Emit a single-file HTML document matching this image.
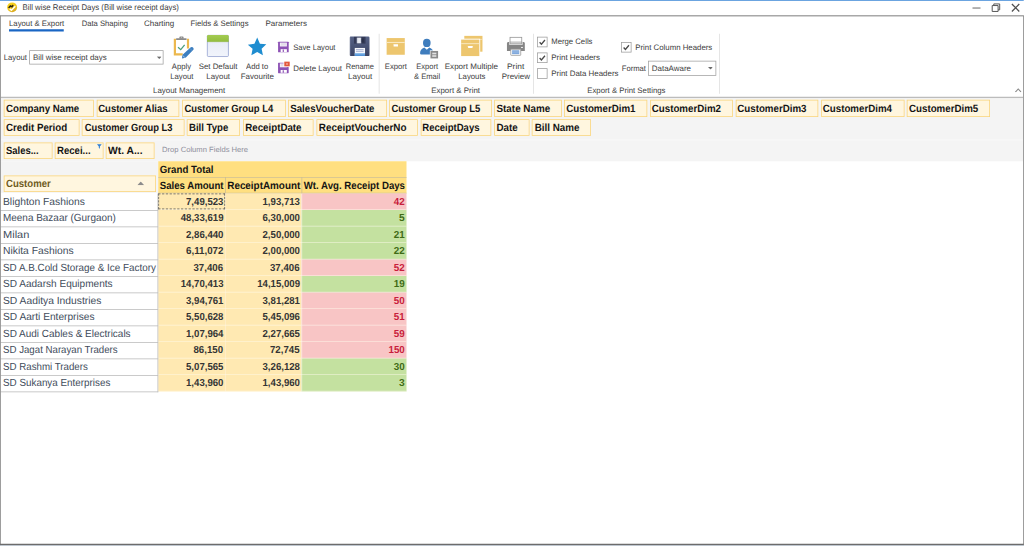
<!DOCTYPE html>
<html lang="en"><head><meta charset="utf-8"><title>Bill wise Receipt Days</title>
<style>
html,body{margin:0;padding:0;background:#fff;overflow:hidden}
body{width:1024px;height:546px;position:relative}
#w{position:absolute;left:0;top:0;width:1366px;height:728px;transform-origin:0 0;transform:scale(0.75);
background:#fff;font-family:"Liberation Sans",sans-serif;overflow:hidden;text-rendering:geometricPrecision}
.b{position:absolute;display:block}
.t{position:absolute;white-space:nowrap;margin:0;padding:0;transform-origin:0 50%}
</style></head>
<body>
<div id="w">
<div class="b" style="left:0px;top:0px;width:1365.33px;height:1.47px;background:#3a86d6;"></div>
<svg class="b" style="left:0px;top:0px" width="53.33" height="26.67" viewBox="0 0 1024 512"><defs><linearGradient id="tig" x1="0.2" y1="0" x2="0.8" y2="1"><stop offset="0" stop-color="#fbd51c"/><stop offset="0.55" stop-color="#f2c71f"/><stop offset="1" stop-color="#cf9f22"/></linearGradient></defs><circle cx="310" cy="188" r="127" fill="url(#tig)"/><path d="M205 190 L262 130 L300 150 L330 118 L350 150 L312 200 L275 178 L235 212 Z" fill="#2b2410"/><path d="M248 222 L292 262 L392 160" fill="none" stroke="#fff" stroke-width="34" stroke-linejoin="miter"/></svg>
<div id="t1" class="t " style="top:2.46px;height:16px;line-height:16px;font-size:11px;color:#3c3c3c;left:29.58px;transform:scaleX(0.9451);">Bill wise Receipt Days (Bill wise receipt days)</div>
<svg class="b" style="left:1293.87px;top:2.67px" width="69.33" height="14.67" viewBox="0 0 52 11"><path d="M2 5.8 H10" stroke="#666" stroke-width="1" fill="none"/><path d="M21.7 3.3 H27.6 V9.2 H21.7 Z M23.3 3.3 V1.7 H29.2 V7.6 H27.6" stroke="#555" stroke-width="1" fill="none"/><path d="M41.4 1.8 L48.8 9.2 M48.8 1.8 L41.4 9.2" stroke="#505050" stroke-width="1.25" fill="none"/></svg>
<div class="b" style="left:0px;top:20px;width:1365.33px;height:2px;background:#a8a8a8;"></div>
<div id="t2" class="t " style="top:23.76px;height:16px;line-height:16px;font-size:10.5px;color:#3c3c3c;left:12.12px;transform:scaleX(0.9854);">Layout &amp; Export</div>
<div id="t3" class="t " style="top:23.76px;height:16px;line-height:16px;font-size:10.5px;color:#3c3c3c;left:108.52px;transform:scaleX(0.9684);">Data Shaping</div>
<div id="t4" class="t " style="top:23.76px;height:16px;line-height:16px;font-size:10.5px;color:#3c3c3c;left:191.85px;transform:scaleX(1.0150);">Charting</div>
<div id="t5" class="t " style="top:23.76px;height:16px;line-height:16px;font-size:10.5px;color:#3c3c3c;left:254.38px;transform:scaleX(0.9819);">Fields &amp; Settings</div>
<div id="t6" class="t " style="top:23.76px;height:16px;line-height:16px;font-size:10.5px;color:#3c3c3c;left:354.38px;transform:scaleX(1.0177);">Parameters</div>
<div class="b" style="left:12px;top:38.67px;width:73.33px;height:3.47px;background:#1a66c4;"></div>
<div class="b" style="left:1.33px;top:129.33px;width:1362.67px;height:1.33px;background:#bcbcbc;"></div>
<div class="b" style="left:1.33px;top:130.67px;width:1362.67px;height:84px;background:#f4f4f4;"></div>
<div class="b" style="left:1.33px;top:214.67px;width:209.47px;height:42.13px;background:#f4f4f4;"></div>
<div class="b" style="left:1.33px;top:185.6px;width:1362.67px;height:1.07px;background:#fafafa;"></div>
<div id="t7" class="t " style="top:69.03px;height:16px;line-height:16px;font-size:10.5px;color:#404040;left:5.18px;transform:scaleX(0.9822);">Layout</div>
<div class="b" style="left:38.67px;top:66.67px;width:179.67px;height:19.47px;background:#fff;border:1px solid #a0a0a0;box-sizing:border-box;"></div>
<div id="t8" class="t " style="top:69.03px;height:16px;line-height:16px;font-size:10.5px;color:#404040;left:43.85px;transform:scaleX(1.0087);">Bill wise receipt days</div>
<svg class="b" style="left:208.67px;top:74.93px" width="6.67" height="3.73" viewBox="0 0 10 5"><path d="M0 0 H10 L5 5 Z" fill="#6a6a6a"/></svg>
<div id="t9" class="t " style="top:80.76px;height:16px;line-height:16px;font-size:10.5px;color:#404040;left:229.18px;transform:scaleX(0.9762);">Apply</div>
<div id="t10" class="t " style="top:93.83px;height:16px;line-height:16px;font-size:10.5px;color:#404040;left:226.52px;transform:scaleX(0.9819);">Layout</div>
<div id="t11" class="t " style="top:80.76px;height:16px;line-height:16px;font-size:10.5px;color:#404040;left:264.52px;transform:scaleX(0.9938);">Set Default</div>
<div id="t12" class="t " style="top:93.83px;height:16px;line-height:16px;font-size:10.5px;color:#404040;left:275.18px;transform:scaleX(1.0034);">Layout</div>
<div id="t13" class="t " style="top:80.76px;height:16px;line-height:16px;font-size:10.5px;color:#404040;left:327.85px;transform:scaleX(0.9760);">Add to</div>
<div id="t14" class="t " style="top:93.83px;height:16px;line-height:16px;font-size:10.5px;color:#404040;left:321.18px;transform:scaleX(1.0118);">Favourite</div>
<div id="t15" class="t " style="top:80.76px;height:16px;line-height:16px;font-size:10.5px;color:#404040;left:461.18px;transform:scaleX(0.9480);">Rename</div>
<div id="t16" class="t " style="top:93.83px;height:16px;line-height:16px;font-size:10.5px;color:#404040;left:463.85px;transform:scaleX(1.0244);">Layout</div>
<div id="t17" class="t " style="top:80.76px;height:16px;line-height:16px;font-size:10.5px;color:#404040;left:513.18px;transform:scaleX(0.9763);">Export</div>
<div id="t18" class="t " style="top:80.76px;height:16px;line-height:16px;font-size:10.5px;color:#404040;left:555.18px;transform:scaleX(0.9542);">Export</div>
<div id="t19" class="t " style="top:93.83px;height:16px;line-height:16px;font-size:10.5px;color:#404040;left:551.85px;transform:scaleX(0.9664);">&amp; Email</div>
<div id="t20" class="t " style="top:80.76px;height:16px;line-height:16px;font-size:10.5px;color:#404040;left:593.18px;transform:scaleX(1.0218);">Export Multiple</div>
<div id="t21" class="t " style="top:93.83px;height:16px;line-height:16px;font-size:10.5px;color:#404040;left:610.52px;transform:scaleX(0.9869);">Layouts</div>
<div id="t22" class="t " style="top:80.76px;height:16px;line-height:16px;font-size:10.5px;color:#404040;left:675.85px;transform:scaleX(1.0637);">Print</div>
<div id="t23" class="t " style="top:93.83px;height:16px;line-height:16px;font-size:10.5px;color:#404040;left:669.18px;transform:scaleX(1.0075);">Preview</div>
<div id="t24" class="t " style="top:55.29px;height:16px;line-height:16px;font-size:10.5px;color:#404040;left:390.52px;transform:scaleX(0.9642);">Save Layout</div>
<div id="t25" class="t " style="top:83.29px;height:16px;line-height:16px;font-size:10.5px;color:#404040;left:391.18px;transform:scaleX(1.0027);">Delete Layout</div>
<div id="t26" class="t " style="top:112.63px;height:16px;line-height:16px;font-size:10.5px;color:#404040;left:203.85px;transform:scaleX(1.0059);">Layout Management</div>
<div id="t27" class="t " style="top:112.63px;height:16px;line-height:16px;font-size:10.5px;color:#404040;left:574.52px;transform:scaleX(1.0028);">Export &amp; Print</div>
<div id="t28" class="t " style="top:112.63px;height:16px;line-height:16px;font-size:10.5px;color:#404040;left:782.52px;transform:scaleX(0.9873);">Export &amp; Print Settings</div>
<div class="b" style="left:504.53px;top:45.33px;width:1px;height:79.33px;background:#dcdcdc;"></div>
<div class="b" style="left:711.2px;top:45.33px;width:1px;height:79.33px;background:#dcdcdc;"></div>
<div class="b" style="left:959.2px;top:45.33px;width:1px;height:79.33px;background:#dcdcdc;"></div>
<svg class="b" style="left:1352.67px;top:116.67px" width="9.33" height="6.67" viewBox="0 0 7 5"><path d="M0.6 4.3 L3.5 1.2 L6.4 4.3" stroke="#8a8a8a" stroke-width="1.1" fill="none"/></svg>
<div class="b" style="left:716px;top:48.8px;width:14px;height:14px;background:#fff;border:1px solid #9c9c9c;box-sizing:border-box;"></div>
<svg class="b" style="left:716px;top:48.8px" width="14" height="14" viewBox="0 0 14 14"><path d="M3.5 7.3 L5.9 9.9 L10.6 4.3" stroke="#4a4a4a" stroke-width="1.75" fill="none"/></svg>
<div id="t29" class="t " style="top:47.83px;height:16px;line-height:16px;font-size:10.5px;color:#404040;left:734.52px;transform:scaleX(0.9809);">Merge Cells</div>
<div class="b" style="left:716px;top:69.73px;width:14px;height:14px;background:#fff;border:1px solid #9c9c9c;box-sizing:border-box;"></div>
<svg class="b" style="left:716px;top:69.73px" width="14" height="14" viewBox="0 0 14 14"><path d="M3.5 7.3 L5.9 9.9 L10.6 4.3" stroke="#4a4a4a" stroke-width="1.75" fill="none"/></svg>
<div id="t30" class="t " style="top:68.63px;height:16px;line-height:16px;font-size:10.5px;color:#404040;left:734.52px;transform:scaleX(1.0118);">Print Headers</div>
<div class="b" style="left:716px;top:90.67px;width:14px;height:14px;background:#fff;border:1px solid #9c9c9c;box-sizing:border-box;"></div>
<div id="t31" class="t " style="top:89.56px;height:16px;line-height:16px;font-size:10.5px;color:#404040;left:734.52px;transform:scaleX(1.0037);">Print Data Headers</div>
<div class="b" style="left:828px;top:56px;width:14px;height:14px;background:#fff;border:1px solid #9c9c9c;box-sizing:border-box;"></div>
<svg class="b" style="left:828px;top:56px" width="14" height="14" viewBox="0 0 14 14"><path d="M3.5 7.3 L5.9 9.9 L10.6 4.3" stroke="#4a4a4a" stroke-width="1.75" fill="none"/></svg>
<div id="t32" class="t " style="top:55.29px;height:16px;line-height:16px;font-size:10.5px;color:#404040;left:847.45px;transform:scaleX(0.9942);">Print Column Headers</div>
<div id="t33" class="t " style="top:82.76px;height:16px;line-height:16px;font-size:10.5px;color:#404040;left:829.18px;transform:scaleX(0.9710);">Format</div>
<div class="b" style="left:864px;top:80.53px;width:90.67px;height:20px;background:#fff;border:1px solid #a0a0a0;box-sizing:border-box;"></div>
<div id="t34" class="t " style="top:82.76px;height:16px;line-height:16px;font-size:10.5px;color:#404040;left:869.18px;transform:scaleX(1.0103);">DataAware</div>
<svg class="b" style="left:943.73px;top:88.8px" width="6.67" height="3.73" viewBox="0 0 10 5"><path d="M0 0 H10 L5 5 Z" fill="#6a6a6a"/></svg>
<svg class="b" style="left:220px;top:40px" width="100" height="45.33" viewBox="0 0 1024 464"><defs><linearGradient id="sdg" x1="0" y1="0" x2="0" y2="1"><stop offset="0" stop-color="#e4e9f6"/><stop offset="1" stop-color="#f1f4fb"/></linearGradient><linearGradient id="sdt" x1="0" y1="0" x2="0" y2="1"><stop offset="0" stop-color="#a3cb52"/><stop offset="1" stop-color="#92bd3e"/></linearGradient></defs><path d="M135 118 V334 H242 M314 118 V252" stroke="#ecb84e" stroke-width="30" fill="none"/><rect x="150" y="111" width="146" height="24" rx="9" fill="#8c8c8c"/><rect x="196" y="90" width="58" height="30" rx="12" fill="#8c8c8c"/><circle cx="225" cy="103" r="6" fill="#e8e8e8"/><path d="M178 234 L215 268 L268 204" stroke="#4d9e7d" stroke-width="18" fill="none"/><path d="M352 236 Q372 222 388 244 Q398 262 384 274 L282 378 L236 340 Z" fill="#3d7fc0"/><path d="M236 340 L282 378 L232 390 Z" fill="#3d7fc0"/><path d="M240 352 L270 378" stroke="#dfeaf6" stroke-width="6"/><path d="M340 250 L372 284" stroke="#8fb6de" stroke-width="6"/><rect x="578" y="73" width="288" height="289" rx="14" fill="url(#sdg)" stroke="#8190c6" stroke-width="9"/><path d="M574 160 V86 Q574 69 591 69 H853 Q870 69 870 86 V160 Z" fill="url(#sdt)"/><path d="M574 160 H870" stroke="#84ab35" stroke-width="5"/></svg>
<svg class="b" style="left:320px;top:40px" width="100" height="45.33" viewBox="0 0 1024 464"><path d="M235 104 L272 186 L359 196 L295 256 L313 346 L235 300 L155 346 L172 256 L107 200 L197 186 Z" fill="#1f8dd0"/><g transform="translate(520,162)"><path d="M0 6 Q0 0 6 0 H139 Q145 0 145 6 V137 Q145 143 139 143 H6 Q0 143 0 137 Z" fill="#8d52b5"/><rect x="25" y="10" width="95" height="53" fill="#f3eff7"/><path d="M40 26 H108 M40 42 H108" stroke="#cfc6d8" stroke-width="7"/><rect x="35" y="100" width="85" height="38" fill="#fff"/><rect x="63" y="104" width="16" height="34" fill="#8d52b5"/></g></svg>
<svg class="b" style="left:360px;top:73.33px" width="100" height="45.33" viewBox="0 0 1024 464"><g transform="translate(110,108)"><path d="M0 6 Q0 0 6 0 H139 Q145 0 145 6 V137 Q145 143 139 143 H6 Q0 143 0 137 Z" fill="#8d52b5"/><rect x="25" y="10" width="95" height="53" fill="#f3eff7"/><path d="M40 26 H108 M40 42 H108" stroke="#cfc6d8" stroke-width="7"/><rect x="35" y="100" width="85" height="38" fill="#fff"/><rect x="63" y="104" width="16" height="34" fill="#8d52b5"/><rect x="75" y="-14" width="84" height="74" fill="#fff"/><rect x="85" y="-14" width="74" height="64" fill="#e2563a"/><path d="M108 4 L136 32 M136 4 L108 32" stroke="#f3b9ab" stroke-width="8"/></g></svg>
<svg class="b" style="left:453.33px;top:40px" width="100" height="45.33" viewBox="0 0 1024 464"><defs><linearGradient id="fg" x1="0" y1="0" x2="0" y2="1"><stop offset="0" stop-color="#566286"/><stop offset="1" stop-color="#3a4363"/></linearGradient><linearGradient id="mg" x1="0" y1="0" x2="1" y2="0"><stop offset="0" stop-color="#c3c9da"/><stop offset="0.5" stop-color="#eef0f6"/><stop offset="1" stop-color="#c9cfde"/></linearGradient><linearGradient id="bg" x1="0" y1="0" x2="0" y2="1"><stop offset="0" stop-color="#8fc0ec"/><stop offset="1" stop-color="#3f86d2"/></linearGradient></defs><rect x="138" y="90" width="268" height="266" rx="16" fill="url(#fg)"/><rect x="138" y="90" width="14" height="266" rx="7" fill="#6a7596" opacity="0.6"/><rect x="194" y="94" width="158" height="92" fill="#343b58"/><rect x="232" y="104" width="62" height="78" fill="url(#mg)"/><rect x="298" y="116" width="30" height="54" fill="#2a3049"/><rect x="205" y="245" width="140" height="108" fill="#f6f8fc"/><path d="M222 268 H326 M222 291 H326" stroke="#98a3c9" stroke-width="11"/><rect x="205" y="315" width="140" height="39" fill="url(#bg)"/><rect x="640" y="110" width="248" height="228" fill="#edc66e"/><rect x="640" y="163" width="248" height="14" fill="#f9e9c1"/><rect x="735" y="196" width="60" height="28" rx="3" fill="#fff"/></svg>
<svg class="b" style="left:546.67px;top:40px" width="100" height="45.33" viewBox="0 0 1024 464"><ellipse cx="226" cy="176" rx="52" ry="57" fill="#3f7dbd"/><path d="M134 318 Q134 258 192 238 L226 268 L260 238 Q318 258 318 318 Q318 336 300 336 H152 Q134 336 134 318 Z" fill="#3f7dbd"/><rect x="268" y="278" width="118" height="116" fill="#fff"/><rect x="276" y="286" width="104" height="102" fill="#8a8a8a"/><rect x="300" y="310" width="56" height="22" fill="#e2e2e2"/><rect x="300" y="344" width="56" height="22" fill="#e2e2e2"/><rect x="738" y="80" width="248" height="216" fill="#edc66e"/><rect x="738" y="122" width="248" height="9" fill="#f9e9c1"/><rect x="683" y="119" width="272" height="248" fill="#fff"/><rect x="695" y="131" width="248" height="225" fill="#edc66e"/><rect x="695" y="180" width="248" height="13" fill="#f9e9c1"/><rect x="790" y="218" width="60" height="28" rx="3" fill="#fff"/></svg>
<svg class="b" style="left:640px;top:40px" width="100" height="45.33" viewBox="0 0 1024 464"><rect x="410" y="100" width="160" height="90" fill="#fff" stroke="#969696" stroke-width="11"/><path d="M368 185 Q368 165 388 165 H592 Q612 165 612 185 V285 H368 Z" fill="#858585"/><rect x="398" y="165" width="184" height="30" fill="#fff"/><rect x="410" y="165" width="160" height="22" fill="#fff" stroke="#969696" stroke-width="11"/><rect x="398" y="190" width="184" height="10" fill="#ededed"/><rect x="560" y="231" width="26" height="14" fill="#f2f2f2"/><rect x="420" y="262" width="136" height="84" rx="6" fill="#fff" stroke="#9a9a9a" stroke-width="11"/><rect x="438" y="276" width="98" height="54" fill="#7fa8dc"/><path d="M438 301 H536" stroke="#b5cdec" stroke-width="7"/></svg>
<div class="b" style="left:5.33px;top:133.33px;width:120px;height:22.33px;background:#fff6df;border:1px solid #f8d37a;box-sizing:border-box;"></div>
<div id="t35" class="t " style="top:136.18px;height:16px;line-height:16px;font-size:14.0px;color:#141414;font-weight:bold;left:7.97px;transform:scaleX(0.9230);">Company Name</div>
<div class="b" style="left:128.67px;top:133.33px;width:110.67px;height:22.33px;background:#fff6df;border:1px solid #f8d37a;box-sizing:border-box;"></div>
<div id="t36" class="t " style="top:136.18px;height:16px;line-height:16px;font-size:14.0px;color:#141414;font-weight:bold;left:131.30px;transform:scaleX(0.9035);">Customer Alias</div>
<div class="b" style="left:243.33px;top:133.33px;width:137.33px;height:22.33px;background:#fff6df;border:1px solid #f8d37a;box-sizing:border-box;"></div>
<div id="t37" class="t " style="top:136.18px;height:16px;line-height:16px;font-size:14.0px;color:#141414;font-weight:bold;left:245.97px;transform:scaleX(0.9001);">Customer Group L4</div>
<div class="b" style="left:384px;top:133.33px;width:132px;height:22.33px;background:#fff6df;border:1px solid #f8d37a;box-sizing:border-box;"></div>
<div id="t38" class="t " style="top:136.18px;height:16px;line-height:16px;font-size:14.0px;color:#141414;font-weight:bold;left:387.30px;transform:scaleX(0.9214);">SalesVoucherDate</div>
<div class="b" style="left:519.33px;top:133.33px;width:136.67px;height:22.33px;background:#fff6df;border:1px solid #f8d37a;box-sizing:border-box;"></div>
<div id="t39" class="t " style="top:136.18px;height:16px;line-height:16px;font-size:14.0px;color:#141414;font-weight:bold;left:521.97px;transform:scaleX(0.9001);">Customer Group L5</div>
<div class="b" style="left:659px;top:133.33px;width:90px;height:22.33px;background:#fff6df;border:1px solid #f8d37a;box-sizing:border-box;"></div>
<div id="t40" class="t " style="top:136.18px;height:16px;line-height:16px;font-size:14.0px;color:#141414;font-weight:bold;left:661.97px;transform:scaleX(0.9396);">State Name</div>
<div class="b" style="left:752.33px;top:133.33px;width:111px;height:22.33px;background:#fff6df;border:1px solid #f8d37a;box-sizing:border-box;"></div>
<div id="t41" class="t " style="top:136.18px;height:16px;line-height:16px;font-size:14.0px;color:#141414;font-weight:bold;left:755.30px;transform:scaleX(0.9271);">CustomerDim1</div>
<div class="b" style="left:866.67px;top:133.33px;width:110.67px;height:22.33px;background:#fff6df;border:1px solid #f8d37a;box-sizing:border-box;"></div>
<div id="t42" class="t " style="top:136.18px;height:16px;line-height:16px;font-size:14.0px;color:#141414;font-weight:bold;left:869.30px;transform:scaleX(0.9271);">CustomerDim2</div>
<div class="b" style="left:980.67px;top:133.33px;width:110.67px;height:22.33px;background:#fff6df;border:1px solid #f8d37a;box-sizing:border-box;"></div>
<div id="t43" class="t " style="top:136.18px;height:16px;line-height:16px;font-size:14.0px;color:#141414;font-weight:bold;left:983.30px;transform:scaleX(0.9271);">CustomerDim3</div>
<div class="b" style="left:1094.67px;top:133.33px;width:111.33px;height:22.33px;background:#fff6df;border:1px solid #f8d37a;box-sizing:border-box;"></div>
<div id="t44" class="t " style="top:136.18px;height:16px;line-height:16px;font-size:14.0px;color:#141414;font-weight:bold;left:1097.30px;transform:scaleX(0.9271);">CustomerDim4</div>
<div class="b" style="left:1209px;top:133.33px;width:111px;height:22.33px;background:#fff6df;border:1px solid #f8d37a;box-sizing:border-box;"></div>
<div id="t45" class="t " style="top:136.18px;height:16px;line-height:16px;font-size:14.0px;color:#141414;font-weight:bold;left:1211.70px;transform:scaleX(0.9271);">CustomerDim5</div>
<div class="b" style="left:5.33px;top:159px;width:100.67px;height:21.67px;background:#fff6df;border:1px solid #f8d37a;box-sizing:border-box;"></div>
<div id="t46" class="t " style="top:161.52px;height:16px;line-height:16px;font-size:14.0px;color:#141414;font-weight:bold;left:7.97px;transform:scaleX(0.9289);">Credit Period</div>
<div class="b" style="left:109.33px;top:159px;width:136.67px;height:21.67px;background:#fff6df;border:1px solid #f8d37a;box-sizing:border-box;"></div>
<div id="t47" class="t " style="top:161.52px;height:16px;line-height:16px;font-size:14.0px;color:#141414;font-weight:bold;left:112.63px;transform:scaleX(0.8899);">Customer Group L3</div>
<div class="b" style="left:249.33px;top:159px;width:70.67px;height:21.67px;background:#fff6df;border:1px solid #f8d37a;box-sizing:border-box;"></div>
<div id="t48" class="t " style="top:161.52px;height:16px;line-height:16px;font-size:14.0px;color:#141414;font-weight:bold;left:251.97px;transform:scaleX(0.9131);">Bill Type</div>
<div class="b" style="left:324px;top:159px;width:94.33px;height:21.67px;background:#fff6df;border:1px solid #f8d37a;box-sizing:border-box;"></div>
<div id="t49" class="t " style="top:161.52px;height:16px;line-height:16px;font-size:14.0px;color:#141414;font-weight:bold;left:327.30px;transform:scaleX(0.9268);">ReceiptDate</div>
<div class="b" style="left:421.67px;top:159px;width:135.67px;height:21.67px;background:#fff6df;border:1px solid #f8d37a;box-sizing:border-box;"></div>
<div id="t50" class="t " style="top:161.52px;height:16px;line-height:16px;font-size:14.0px;color:#141414;font-weight:bold;left:424.63px;transform:scaleX(0.9419);">ReceiptVoucherNo</div>
<div class="b" style="left:560.67px;top:159px;width:94.33px;height:21.67px;background:#fff6df;border:1px solid #f8d37a;box-sizing:border-box;"></div>
<div id="t51" class="t " style="top:161.52px;height:16px;line-height:16px;font-size:14.0px;color:#141414;font-weight:bold;left:563.30px;transform:scaleX(0.9082);">ReceiptDays</div>
<div class="b" style="left:659px;top:159px;width:47px;height:21.67px;background:#fff6df;border:1px solid #f8d37a;box-sizing:border-box;"></div>
<div id="t52" class="t " style="top:161.52px;height:16px;line-height:16px;font-size:14.0px;color:#141414;font-weight:bold;left:661.97px;transform:scaleX(0.9332);">Date</div>
<div class="b" style="left:709.33px;top:159px;width:79px;height:21.67px;background:#fff6df;border:1px solid #f8d37a;box-sizing:border-box;"></div>
<div id="t53" class="t " style="top:161.52px;height:16px;line-height:16px;font-size:14.0px;color:#141414;font-weight:bold;left:712.63px;transform:scaleX(0.9351);">Bill Name</div>
<div class="b" style="left:5.33px;top:189.6px;width:64.67px;height:22.07px;background:#fff6df;border:1px solid #f8d37a;box-sizing:border-box;"></div>
<div id="t54" class="t " style="top:192.32px;height:16px;line-height:16px;font-size:14.0px;color:#141414;font-weight:bold;left:7.70px;transform:scaleX(0.8992);">Sales...</div>
<div class="b" style="left:73.33px;top:189.6px;width:64.67px;height:22.07px;background:#fff6df;border:1px solid #f8d37a;box-sizing:border-box;"></div>
<div id="t55" class="t " style="top:192.32px;height:16px;line-height:16px;font-size:14.0px;color:#141414;font-weight:bold;left:75.97px;transform:scaleX(0.9123);">Recei...</div>
<div class="b" style="left:141.33px;top:189.6px;width:64.67px;height:22.07px;background:#fff6df;border:1px solid #f8d37a;box-sizing:border-box;"></div>
<div id="t56" class="t " style="top:192.32px;height:16px;line-height:16px;font-size:14.0px;color:#141414;font-weight:bold;left:143.70px;transform:scaleX(0.9818);">Wt. A...</div>
<svg class="b" style="left:129.33px;top:192.27px" width="6.93" height="6.93" viewBox="0 0 9 9"><path d="M0.4 0.6 H8.6 L5.4 4.2 V8.4 L3.6 7 V4.2 Z" fill="#2f7fd6"/></svg>
<div id="t57" class="t " style="top:193.34px;height:16px;line-height:16px;font-size:10px;color:#8f8f9c;left:215.72px;transform:scaleX(1.0177);">Drop Column Fields Here</div>
<div class="b" style="left:5.33px;top:233.6px;width:202.67px;height:22.4px;background:#fff6df;border:1px solid #f8d37a;box-sizing:border-box;"></div>
<div id="t58" class="t " style="top:236.08px;height:16px;line-height:16px;font-size:14.0px;color:#6f5b1c;font-weight:bold;left:7.97px;transform:scaleX(0.9128);">Customer</div>
<svg class="b" style="left:183.33px;top:241.73px" width="9.33" height="5.2" viewBox="0 0 10 5.4"><path d="M0 5.4 L5 0 L10 5.4 Z" fill="#8c8c8c"/></svg>
<div class="b" style="left:210.7px;top:214.7px;width:331.40000000000003px;height:43.30000000000001px;background:#ffdf80;"></div>
<div class="b" style="left:210.7px;top:235.7px;width:331.40000000000003px;height:1px;background:#cfc196;"></div>
<div class="b" style="left:300.1px;top:236px;width:1px;height:22px;background:#cbbd93;"></div>
<div class="b" style="left:401.6px;top:236px;width:1px;height:22px;background:#cbbd93;"></div>
<div class="b" style="left:210.7px;top:257.2px;width:331.40000000000003px;height:1px;background:#cbbf9c;"></div>
<div id="t59" class="t " style="top:217.02px;height:16px;line-height:16px;font-size:14.0px;color:#141414;font-weight:bold;left:212.63px;transform:scaleX(0.9244);">Grand Total</div>
<div id="t60" class="t " style="top:239.15px;height:16px;line-height:16px;font-size:14.0px;color:#141414;font-weight:bold;left:212.63px;transform:scaleX(0.9155);">Sales Amount</div>
<div id="t61" class="t " style="top:239.15px;height:16px;line-height:16px;font-size:14.0px;color:#141414;font-weight:bold;left:302.63px;transform:scaleX(0.9409);">ReceiptAmount</div>
<div id="t62" class="t " style="top:239.15px;height:16px;line-height:16px;font-size:14.0px;color:#141414;font-weight:bold;left:404.63px;transform:scaleX(0.9197);">Wt. Avg. Receipt Days</div>
<div class="b" style="left:1.3px;top:258px;width:209.39999999999998px;height:264px;background:#fff;"></div>
<div class="b" style="left:210.7px;top:258px;width:191.40000000000003px;height:22px;background:#ffe9b2;"></div>
<div class="b" style="left:402.1px;top:258px;width:140.0px;height:22px;background:#f8c5c5;"></div>
<div class="b" style="left:210.7px;top:279.4px;width:331.40000000000003px;height:1.1px;background:rgba(255,250,235,0.62);"></div>
<div class="b" style="left:1.3px;top:279.6px;width:209.39999999999998px;height:1px;background:#b8b8b8;"></div>
<div id="t63" class="t " style="top:260.82px;height:16px;line-height:16px;font-size:13.8px;color:#414c5b;left:3.84px;transform:scaleX(0.9950);">Blighton Fashions</div>
<div id="t64" class="t " style="top:260.89px;height:16px;line-height:16px;font-size:13.6px;color:#353535;font-weight:bold;left:247.68px;transform:scaleX(0.9442);">7,49,523</div>
<div id="t65" class="t " style="top:260.89px;height:16px;line-height:16px;font-size:13.6px;color:#353535;font-weight:bold;left:349.68px;transform:scaleX(0.9442);">1,93,713</div>
<div id="t66" class="t " style="top:260.89px;height:16px;line-height:16px;font-size:13.6px;color:#c81e3c;font-weight:bold;left:525.04px;transform:scaleX(0.9660);">42</div>
<div class="b" style="left:210.7px;top:280px;width:191.40000000000003px;height:22px;background:#ffe9b2;"></div>
<div class="b" style="left:402.1px;top:280px;width:140.0px;height:22px;background:#c4e1a0;"></div>
<div class="b" style="left:210.7px;top:301.4px;width:331.40000000000003px;height:1.1px;background:rgba(255,250,235,0.62);"></div>
<div class="b" style="left:1.3px;top:301.6px;width:209.39999999999998px;height:1px;background:#b8b8b8;"></div>
<div id="t67" class="t " style="top:282.82px;height:16px;line-height:16px;font-size:13.8px;color:#414c5b;left:3.84px;transform:scaleX(0.9618);">Meena Bazaar (Gurgaon)</div>
<div id="t68" class="t " style="top:282.89px;height:16px;line-height:16px;font-size:13.6px;color:#353535;font-weight:bold;left:240.57px;transform:scaleX(0.9437);">48,33,619</div>
<div id="t69" class="t " style="top:282.89px;height:16px;line-height:16px;font-size:13.6px;color:#353535;font-weight:bold;left:349.68px;transform:scaleX(0.9442);">6,30,000</div>
<div id="t70" class="t " style="top:282.89px;height:16px;line-height:16px;font-size:13.6px;color:#3f6b16;font-weight:bold;left:532.15px;">5</div>
<div class="b" style="left:210.7px;top:302px;width:191.40000000000003px;height:22px;background:#ffe9b2;"></div>
<div class="b" style="left:402.1px;top:302px;width:140.0px;height:22px;background:#c4e1a0;"></div>
<div class="b" style="left:210.7px;top:323.4px;width:331.40000000000003px;height:1.1px;background:rgba(255,250,235,0.62);"></div>
<div class="b" style="left:1.3px;top:323.6px;width:209.39999999999998px;height:1px;background:#b8b8b8;"></div>
<div id="t71" class="t " style="top:304.82px;height:16px;line-height:16px;font-size:13.8px;color:#414c5b;left:3.84px;transform:scaleX(1.0654);">Milan</div>
<div id="t72" class="t " style="top:304.89px;height:16px;line-height:16px;font-size:13.6px;color:#353535;font-weight:bold;left:247.68px;transform:scaleX(0.9442);">2,86,440</div>
<div id="t73" class="t " style="top:304.89px;height:16px;line-height:16px;font-size:13.6px;color:#353535;font-weight:bold;left:349.68px;transform:scaleX(0.9442);">2,50,000</div>
<div id="t74" class="t " style="top:304.89px;height:16px;line-height:16px;font-size:13.6px;color:#3f6b16;font-weight:bold;left:525.04px;transform:scaleX(0.9660);">21</div>
<div class="b" style="left:210.7px;top:324px;width:191.40000000000003px;height:22px;background:#ffe9b2;"></div>
<div class="b" style="left:402.1px;top:324px;width:140.0px;height:22px;background:#c4e1a0;"></div>
<div class="b" style="left:210.7px;top:345.4px;width:331.40000000000003px;height:1.1px;background:rgba(255,250,235,0.62);"></div>
<div class="b" style="left:1.3px;top:345.6px;width:209.39999999999998px;height:1px;background:#b8b8b8;"></div>
<div id="t75" class="t " style="top:326.82px;height:16px;line-height:16px;font-size:13.8px;color:#414c5b;left:3.84px;transform:scaleX(0.9980);">Nikita Fashions</div>
<div id="t76" class="t " style="top:326.89px;height:16px;line-height:16px;font-size:13.6px;color:#353535;font-weight:bold;left:247.68px;transform:scaleX(0.9578);">6,11,072</div>
<div id="t77" class="t " style="top:326.89px;height:16px;line-height:16px;font-size:13.6px;color:#353535;font-weight:bold;left:349.68px;transform:scaleX(0.9442);">2,00,000</div>
<div id="t78" class="t " style="top:326.89px;height:16px;line-height:16px;font-size:13.6px;color:#3f6b16;font-weight:bold;left:525.04px;transform:scaleX(0.9660);">22</div>
<div class="b" style="left:210.7px;top:346px;width:191.40000000000003px;height:22px;background:#ffe9b2;"></div>
<div class="b" style="left:402.1px;top:346px;width:140.0px;height:22px;background:#f8c5c5;"></div>
<div class="b" style="left:210.7px;top:367.4px;width:331.40000000000003px;height:1.1px;background:rgba(255,250,235,0.62);"></div>
<div class="b" style="left:1.3px;top:367.6px;width:209.39999999999998px;height:1px;background:#b8b8b8;"></div>
<div id="t79" class="t " style="top:348.82px;height:16px;line-height:16px;font-size:13.8px;color:#414c5b;left:3.84px;transform:scaleX(0.9525);">SD A.B.Cold Storage &amp; Ice Factory</div>
<div id="t80" class="t " style="top:348.89px;height:16px;line-height:16px;font-size:13.6px;color:#353535;font-weight:bold;left:258.25px;transform:scaleX(0.9476);">37,406</div>
<div id="t81" class="t " style="top:348.89px;height:16px;line-height:16px;font-size:13.6px;color:#353535;font-weight:bold;left:360.25px;transform:scaleX(0.9476);">37,406</div>
<div id="t82" class="t " style="top:348.89px;height:16px;line-height:16px;font-size:13.6px;color:#c81e3c;font-weight:bold;left:525.04px;transform:scaleX(0.9660);">52</div>
<div class="b" style="left:210.7px;top:368px;width:191.40000000000003px;height:22px;background:#ffe9b2;"></div>
<div class="b" style="left:402.1px;top:368px;width:140.0px;height:22px;background:#c4e1a0;"></div>
<div class="b" style="left:210.7px;top:389.4px;width:331.40000000000003px;height:1.1px;background:rgba(255,250,235,0.62);"></div>
<div class="b" style="left:1.3px;top:389.6px;width:209.39999999999998px;height:1px;background:#b8b8b8;"></div>
<div id="t83" class="t " style="top:370.82px;height:16px;line-height:16px;font-size:13.8px;color:#414c5b;left:3.84px;transform:scaleX(0.9721);">SD Aadarsh Equipments</div>
<div id="t84" class="t " style="top:370.89px;height:16px;line-height:16px;font-size:13.6px;color:#353535;font-weight:bold;left:240.57px;transform:scaleX(0.9437);">14,70,413</div>
<div id="t85" class="t " style="top:370.89px;height:16px;line-height:16px;font-size:13.6px;color:#353535;font-weight:bold;left:342.57px;transform:scaleX(0.9437);">14,15,009</div>
<div id="t86" class="t " style="top:370.89px;height:16px;line-height:16px;font-size:13.6px;color:#3f6b16;font-weight:bold;left:525.04px;transform:scaleX(0.9660);">19</div>
<div class="b" style="left:210.7px;top:390px;width:191.40000000000003px;height:22px;background:#ffe9b2;"></div>
<div class="b" style="left:402.1px;top:390px;width:140.0px;height:22px;background:#f8c5c5;"></div>
<div class="b" style="left:210.7px;top:411.4px;width:331.40000000000003px;height:1.1px;background:rgba(255,250,235,0.62);"></div>
<div class="b" style="left:1.3px;top:411.6px;width:209.39999999999998px;height:1px;background:#b8b8b8;"></div>
<div id="t87" class="t " style="top:392.82px;height:16px;line-height:16px;font-size:13.8px;color:#414c5b;left:3.84px;transform:scaleX(0.9942);">SD Aaditya Industries</div>
<div id="t88" class="t " style="top:392.89px;height:16px;line-height:16px;font-size:13.6px;color:#353535;font-weight:bold;left:247.68px;transform:scaleX(0.9442);">3,94,761</div>
<div id="t89" class="t " style="top:392.89px;height:16px;line-height:16px;font-size:13.6px;color:#353535;font-weight:bold;left:349.68px;transform:scaleX(0.9442);">3,81,281</div>
<div id="t90" class="t " style="top:392.89px;height:16px;line-height:16px;font-size:13.6px;color:#c81e3c;font-weight:bold;left:525.04px;transform:scaleX(0.9660);">50</div>
<div class="b" style="left:210.7px;top:412px;width:191.40000000000003px;height:22px;background:#ffe9b2;"></div>
<div class="b" style="left:402.1px;top:412px;width:140.0px;height:22px;background:#f8c5c5;"></div>
<div class="b" style="left:210.7px;top:433.4px;width:331.40000000000003px;height:1.1px;background:rgba(255,250,235,0.62);"></div>
<div class="b" style="left:1.3px;top:433.6px;width:209.39999999999998px;height:1px;background:#b8b8b8;"></div>
<div id="t91" class="t " style="top:414.82px;height:16px;line-height:16px;font-size:13.8px;color:#414c5b;left:3.84px;transform:scaleX(0.9831);">SD Aarti Enterprises</div>
<div id="t92" class="t " style="top:414.89px;height:16px;line-height:16px;font-size:13.6px;color:#353535;font-weight:bold;left:247.68px;transform:scaleX(0.9442);">5,50,628</div>
<div id="t93" class="t " style="top:414.89px;height:16px;line-height:16px;font-size:13.6px;color:#353535;font-weight:bold;left:349.68px;transform:scaleX(0.9442);">5,45,096</div>
<div id="t94" class="t " style="top:414.89px;height:16px;line-height:16px;font-size:13.6px;color:#c81e3c;font-weight:bold;left:525.04px;transform:scaleX(0.9660);">51</div>
<div class="b" style="left:210.7px;top:434px;width:191.40000000000003px;height:22px;background:#ffe9b2;"></div>
<div class="b" style="left:402.1px;top:434px;width:140.0px;height:22px;background:#f8c5c5;"></div>
<div class="b" style="left:210.7px;top:455.4px;width:331.40000000000003px;height:1.1px;background:rgba(255,250,235,0.62);"></div>
<div class="b" style="left:1.3px;top:455.6px;width:209.39999999999998px;height:1px;background:#b8b8b8;"></div>
<div id="t95" class="t " style="top:436.82px;height:16px;line-height:16px;font-size:13.8px;color:#414c5b;left:3.84px;transform:scaleX(0.9646);">SD Audi Cables &amp; Electricals</div>
<div id="t96" class="t " style="top:436.89px;height:16px;line-height:16px;font-size:13.6px;color:#353535;font-weight:bold;left:247.68px;transform:scaleX(0.9442);">1,07,964</div>
<div id="t97" class="t " style="top:436.89px;height:16px;line-height:16px;font-size:13.6px;color:#353535;font-weight:bold;left:349.68px;transform:scaleX(0.9442);">2,27,665</div>
<div id="t98" class="t " style="top:436.89px;height:16px;line-height:16px;font-size:13.6px;color:#c81e3c;font-weight:bold;left:525.04px;transform:scaleX(0.9660);">59</div>
<div class="b" style="left:210.7px;top:456px;width:191.40000000000003px;height:22px;background:#ffe9b2;"></div>
<div class="b" style="left:402.1px;top:456px;width:140.0px;height:22px;background:#f8c5c5;"></div>
<div class="b" style="left:210.7px;top:477.4px;width:331.40000000000003px;height:1.1px;background:rgba(255,250,235,0.62);"></div>
<div class="b" style="left:1.3px;top:477.6px;width:209.39999999999998px;height:1px;background:#b8b8b8;"></div>
<div id="t99" class="t " style="top:458.82px;height:16px;line-height:16px;font-size:13.8px;color:#414c5b;left:3.84px;transform:scaleX(0.9355);">SD Jagat Narayan Traders</div>
<div id="t100" class="t " style="top:458.89px;height:16px;line-height:16px;font-size:13.6px;color:#353535;font-weight:bold;left:258.25px;transform:scaleX(0.9476);">86,150</div>
<div id="t101" class="t " style="top:458.89px;height:16px;line-height:16px;font-size:13.6px;color:#353535;font-weight:bold;left:360.25px;transform:scaleX(0.9476);">72,745</div>
<div id="t102" class="t " style="top:458.89px;height:16px;line-height:16px;font-size:13.6px;color:#c81e3c;font-weight:bold;left:517.93px;transform:scaleX(0.9574);">150</div>
<div class="b" style="left:210.7px;top:478px;width:191.40000000000003px;height:22px;background:#ffe9b2;"></div>
<div class="b" style="left:402.1px;top:478px;width:140.0px;height:22px;background:#c4e1a0;"></div>
<div class="b" style="left:210.7px;top:499.4px;width:331.40000000000003px;height:1.1px;background:rgba(255,250,235,0.62);"></div>
<div class="b" style="left:1.3px;top:499.6px;width:209.39999999999998px;height:1px;background:#b8b8b8;"></div>
<div id="t103" class="t " style="top:480.82px;height:16px;line-height:16px;font-size:13.8px;color:#414c5b;left:3.84px;transform:scaleX(0.9399);">SD Rashmi Traders</div>
<div id="t104" class="t " style="top:480.89px;height:16px;line-height:16px;font-size:13.6px;color:#353535;font-weight:bold;left:247.68px;transform:scaleX(0.9442);">5,07,565</div>
<div id="t105" class="t " style="top:480.89px;height:16px;line-height:16px;font-size:13.6px;color:#353535;font-weight:bold;left:349.68px;transform:scaleX(0.9442);">3,26,128</div>
<div id="t106" class="t " style="top:480.89px;height:16px;line-height:16px;font-size:13.6px;color:#3f6b16;font-weight:bold;left:525.04px;transform:scaleX(0.9660);">30</div>
<div class="b" style="left:210.7px;top:500px;width:191.40000000000003px;height:22px;background:#ffe9b2;"></div>
<div class="b" style="left:402.1px;top:500px;width:140.0px;height:22px;background:#c4e1a0;"></div>
<div class="b" style="left:210.7px;top:521.4px;width:331.40000000000003px;height:1.1px;background:rgba(255,250,235,0.62);"></div>
<div class="b" style="left:1.3px;top:521.6px;width:209.39999999999998px;height:1px;background:#b8b8b8;"></div>
<div id="t107" class="t " style="top:502.82px;height:16px;line-height:16px;font-size:13.8px;color:#414c5b;left:3.84px;transform:scaleX(0.9523);">SD Sukanya Enterprises</div>
<div id="t108" class="t " style="top:502.89px;height:16px;line-height:16px;font-size:13.6px;color:#353535;font-weight:bold;left:247.68px;transform:scaleX(0.9442);">1,43,960</div>
<div id="t109" class="t " style="top:502.89px;height:16px;line-height:16px;font-size:13.6px;color:#353535;font-weight:bold;left:349.68px;transform:scaleX(0.9442);">1,43,960</div>
<div id="t110" class="t " style="top:502.89px;height:16px;line-height:16px;font-size:13.6px;color:#3f6b16;font-weight:bold;left:532.15px;">3</div>
<div class="b" style="left:300.1px;top:258px;width:1px;height:264px;background:rgba(255,250,235,0.5);"></div>
<div class="b" style="left:401.6px;top:258px;width:1px;height:264px;background:rgba(255,250,235,0.5);"></div>
<div class="b" style="left:209.6px;top:258px;width:1px;height:264.6px;background:#bcbcbc;"></div>
<div class="b" style="left:211.0px;top:258.3px;width:88.70000000000003px;height:21px;border:1px dashed #5a5a5a;box-sizing:border-box;"></div>
<div class="b" style="left:0px;top:21.33px;width:1.33px;height:705.33px;background:#7c7c7c;"></div>
<div class="b" style="left:1364px;top:21.33px;width:1.33px;height:705.33px;background:#7c7c7c;"></div>
<div class="b" style="left:0px;top:725.07px;width:1365.33px;height:1.47px;background:#6c6c6c;"></div>
<div class="b" style="left:0px;top:726.53px;width:1365.33px;height:1.47px;background:#b4bfcb;"></div>
</div>
</body></html>
